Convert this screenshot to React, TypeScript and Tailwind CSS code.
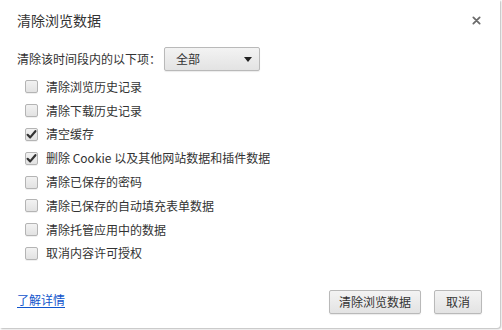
import React from "react";

const font = { fontFamily: '"Noto Sans CJK SC", "Noto Sans", sans-serif' };

function Checkbox({ checked }: { checked?: boolean }) {
  return (
    <span className="relative w-[13px] h-[13px] shrink-0 rounded-[2px] border border-[#b4b4b4] bg-gradient-to-b from-[#f2f2f2] to-[#e2e2e2] shadow-[0_1px_0_rgba(0,0,0,0.06)]">
      {checked && (
        <svg viewBox="0 0 13 13" className="absolute left-[-1px] top-[-1px] w-[13px] h-[13px]">
          <path d="M2.6 6.8 L5.2 9.4 L10.4 3.2" fill="none" stroke="#333" strokeWidth="2.2" strokeLinecap="round" strokeLinejoin="round" />
        </svg>
      )}
    </span>
  );
}

const items: [string, boolean][] = [
  ["清除浏览历史记录", false],
  ["清除下载历史记录", false],
  ["清空缓存", true],
  ["删除 Cookie 以及其他网站数据和插件数据", true],
  ["清除已保存的密码", false],
  ["清除已保存的自动填充表单数据", false],
  ["清除托管应用中的数据", false],
  ["取消内容许可授权", false],
];

export default function App() {
  return (
    <div className="w-[502px] h-[330px] bg-white" style={font}>
      <div className="w-[500px] h-[328px] bg-white rounded-br-[3px] shadow-[1px_1px_2px_rgba(0,0,0,0.28)] flex flex-col text-[#333]">
        <div className="flex items-center justify-between pl-[17px] pr-[19px] pt-[10px]">
          <span className="text-[14px] leading-[20px] text-[#333]">清除浏览数据</span>
          <svg viewBox="0 0 10 10" className="w-[9px] h-[9px] mt-[1px]">
            <path d="M1.5 1.5 L8.5 8.5 M8.5 1.5 L1.5 8.5" stroke="#6b6b6b" strokeWidth="2" strokeLinecap="round" />
          </svg>
        </div>

        <div className="flex items-center pl-[17px] mt-[17px]">
          <span className="text-[12px] leading-[16px] w-[147px]">清除该时间段内的以下项：</span>
          <div className="w-[96px] h-[24px] rounded-[2px] border border-[#b9b9b9] bg-gradient-to-b from-[#f3f3f3] to-[#e3e3e3] shadow-[0_1px_1px_rgba(0,0,0,0.08)] flex items-center justify-between pl-[11px] pr-[7px]">
            <span className="text-[12px] leading-[16px]">全部</span>
            <svg viewBox="0 0 8 5" className="w-[8px] h-[5px]">
              <path d="M0 0 L8 0 L4 5 Z" fill="#222" />
            </svg>
          </div>
        </div>

        <div className="flex flex-col pl-[25px] mt-[4px]">
          {items.map(([label, checked]) => (
            <div key={label} className="h-[23.8px] flex items-center gap-[8px]">
              <Checkbox checked={checked} />
              <span className="text-[12px] leading-[16px]">{label}</span>
            </div>
          ))}
        </div>

        <div className="mt-auto flex items-center justify-between pl-[17px] pr-[18px] pb-[14px]">
          <a className="text-[12px] leading-[16px] text-[#1155cc] underline underline-offset-2 mt-[-5px]">了解详情</a>
          <div className="flex items-center gap-[13px]">
            <button className="w-[92px] h-[24px] rounded-[2px] border border-[#b9b9b9] bg-gradient-to-b from-[#f3f3f3] to-[#e3e3e3] shadow-[0_1px_1px_rgba(0,0,0,0.08)] text-[12px] text-[#333]">
              清除浏览数据
            </button>
            <button className="w-[48px] h-[24px] rounded-[2px] border border-[#b9b9b9] bg-gradient-to-b from-[#f3f3f3] to-[#e3e3e3] shadow-[0_1px_1px_rgba(0,0,0,0.08)] text-[12px] text-[#333]">
              取消
            </button>
          </div>
        </div>
      </div>
    </div>
  );
}
